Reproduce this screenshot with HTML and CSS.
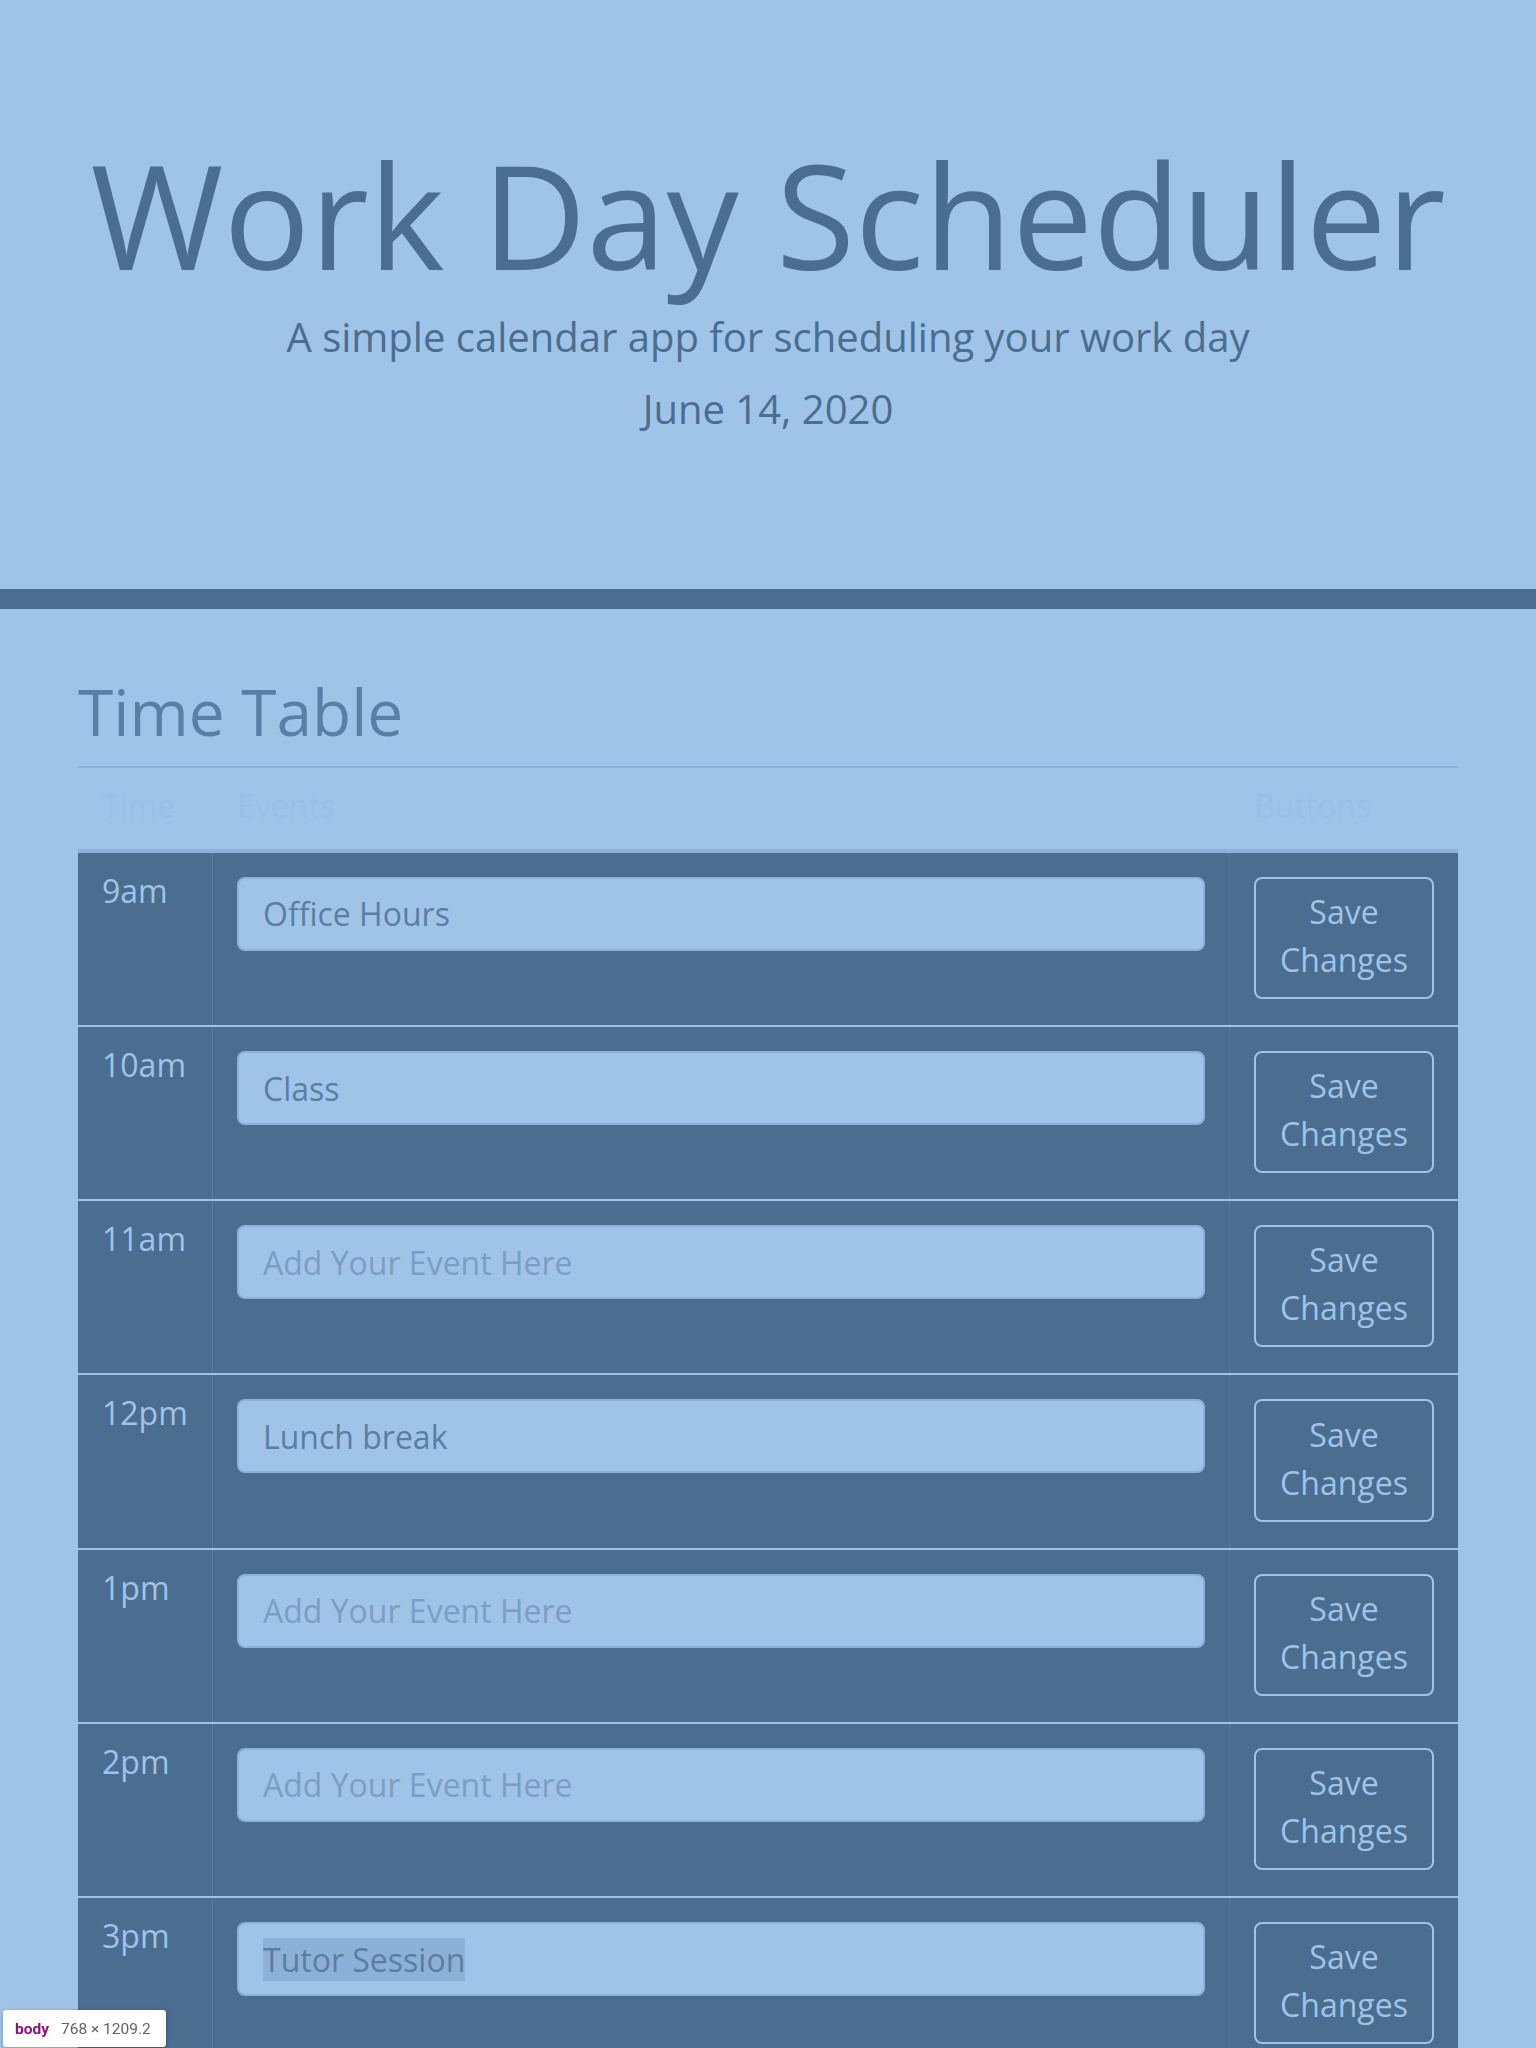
FILE: index.html
```html
<!DOCTYPE html>
<html lang="en">
<head>
<meta charset="utf-8">
<title>Work Day Scheduler</title>
<link rel="stylesheet" href="styles.css">
</head>
<body>
<header class="hero">
  <h1 class="hero-title">Work Day Scheduler</h1>
  <p class="hero-lead">A simple calendar app for scheduling your work day</p>
  <p class="hero-date">June 14, 2020</p>
</header>

<main class="container">
  <h2 class="section-title">Time Table</h2>
  <div class="timetable">
    <div class="tt-head">
      <div class="th">Time</div>
      <div class="th th-divided">Events</div>
      <div class="th th-divided">Buttons</div>
    </div>

    <div class="slot slot-first">
      <div class="slot-time">9am</div>
      <div class="slot-event"><input class="event-input" type="text" value="Office Hours" placeholder="Add Your Event Here"></div>
      <div class="slot-action"><button class="save-btn" type="button">Save Changes</button></div>
    </div>
    <div class="slot">
      <div class="slot-time">10am</div>
      <div class="slot-event"><input class="event-input" type="text" value="Class" placeholder="Add Your Event Here"></div>
      <div class="slot-action"><button class="save-btn" type="button">Save Changes</button></div>
    </div>
    <div class="slot">
      <div class="slot-time">11am</div>
      <div class="slot-event"><input class="event-input" type="text" value="" placeholder="Add Your Event Here"></div>
      <div class="slot-action"><button class="save-btn" type="button">Save Changes</button></div>
    </div>
    <div class="slot">
      <div class="slot-time">12pm</div>
      <div class="slot-event"><input class="event-input" type="text" value="Lunch break" placeholder="Add Your Event Here"></div>
      <div class="slot-action"><button class="save-btn" type="button">Save Changes</button></div>
    </div>
    <div class="slot">
      <div class="slot-time">1pm</div>
      <div class="slot-event"><input class="event-input" type="text" value="" placeholder="Add Your Event Here"></div>
      <div class="slot-action"><button class="save-btn" type="button">Save Changes</button></div>
    </div>
    <div class="slot">
      <div class="slot-time">2pm</div>
      <div class="slot-event"><input class="event-input" type="text" value="" placeholder="Add Your Event Here"></div>
      <div class="slot-action"><button class="save-btn" type="button">Save Changes</button></div>
    </div>
    <div class="slot">
      <div class="slot-time">3pm</div>
      <div class="slot-event"><input class="event-input" id="selected-event" type="text" value="Tutor Session" placeholder="Add Your Event Here"></div>
      <div class="slot-action"><button class="save-btn" type="button">Save Changes</button></div>
    </div>
    <div class="slot">
      <div class="slot-time">4pm</div>
      <div class="slot-event"><input class="event-input" type="text" value="" placeholder="Add Your Event Here"></div>
      <div class="slot-action"><button class="save-btn" type="button">Save Changes</button></div>
    </div>
    <div class="slot">
      <div class="slot-time">5pm</div>
      <div class="slot-event"><input class="event-input" type="text" value="" placeholder="Add Your Event Here"></div>
      <div class="slot-action"><button class="save-btn" type="button">Save Changes</button></div>
    </div>
  </div>
</main>

<div class="inspect-tip"><span class="inspect-tag">body</span><span class="inspect-dims">768 × 1209.2</span></div>

<script src="script.js"></script>
</body>
</html>
```

FILE: styles.css
```css
* {
  box-sizing: border-box;
}

html,
body {
  margin: 0;
  padding: 0;
}

body {
  background: #a0c4e8;
  font-family: "Open Sans", "DejaVu Sans", sans-serif;
  font-weight: 400;
  color: #4a6d90;
}

/* ---------- hero ---------- */
.hero {
  height: 609px;
  padding-top: 128px;
  border-bottom: 20px solid #4a6d90;
  text-align: center;
}

.hero-title {
  margin: 0 0 6px;
  font-size: 144px;
  font-weight: 400;
  line-height: 1.2;
  color: #4a6d90;
}

.hero-lead {
  margin: 0 0 12.4px;
  font-size: 40px;
  line-height: 60px;
  color: #4a6d90;
}

.hero-date {
  margin: 0;
  font-size: 40px;
  line-height: 60px;
  color: #4a6d90;
}

/* ---------- main ---------- */
.container {
  width: 1380px;
  margin: 0 auto;
}

.section-title {
  margin: 64.5px 0 16px;
  font-size: 64px;
  font-weight: 400;
  line-height: 1.2;
  color: #5a7fa6;
}

.tt-head,
.slot {
  display: grid;
  grid-template-columns: 134px 1fr 229px;
}

.tt-head {
  border-top: 2px solid #8fb3d8;
  border-bottom: 4px solid #8db1d6;
}

.th {
  padding: 16px 24px 21.5px;
  font-size: 32px;
  line-height: normal;
  color: #9abfe5;
}

.th-divided {
  border-left: 1px solid transparent;
}

.slot {
  background: #4a6d90;
  border-top: 2px solid #9fc3e7;
}

.slot-first {
  border-top: none;
}

.slot-time {
  padding: 16px 24px;
  font-size: 32px;
  line-height: normal;
  color: #a0c4e8;
}

.slot-event {
  border-left: 1px solid #577a9d;
  padding: 24px;
}

.slot-action {
  border-left: 1px solid #577a9d;
  padding: 24px 24px 26px;
}

.event-input {
  display: block;
  width: 100%;
  height: 74px;
  margin: 0;
  padding: 0 24px;
  border: 2px solid #8eb2d7;
  border-radius: 8px;
  background: #a0c4e8;
  font-family: "Open Sans", sans-serif;
  font-size: 32px;
  color: #5a7ea3;
  outline: none;
}

.event-input::placeholder {
  color: #7c9ec3;
  opacity: 1;
}

.event-input:focus {
  outline: none;
  box-shadow: none;
}

.event-input::selection {
  background: #8db1d6;
  color: #5a7ea3;
}

.save-btn {
  display: block;
  width: 180px;
  margin: 0;
  padding: 9.2px 24px 13.04px;
  border: 2px solid #a0c4e8;
  border-radius: 8px;
  background: transparent;
  font-family: "Open Sans", sans-serif;
  font-size: 32px;
  line-height: 48px;
  color: #a0c4e8;
  text-align: center;
  cursor: pointer;
}

/* ---------- devtools inspect tooltip overlay ---------- */
.inspect-tip {
  position: fixed;
  left: 3px;
  bottom: 1px;
  width: 163px;
  height: 37px;
  display: flex;
  align-items: center;
  gap: 12px;
  padding: 0 11px 0 12px;
  background: #ffffff;
  border-radius: 3px;
  box-shadow: 0 1px 4px rgba(0, 0, 0, 0.25);
  font-family: Roboto, "Liberation Sans", sans-serif;
  font-size: 15.5px;
  white-space: nowrap;
}

.inspect-tag {
  font-weight: 700;
  color: #881280;
}

.inspect-dims {
  color: #5f6368;
}
```

FILE: script.js
```js
(function () {
  var el = document.getElementById('selected-event');
  if (!el) return;
  try {
    el.focus({ preventScroll: true });
    el.setSelectionRange(0, el.value.length);
  } catch (e) {}
})();
```
